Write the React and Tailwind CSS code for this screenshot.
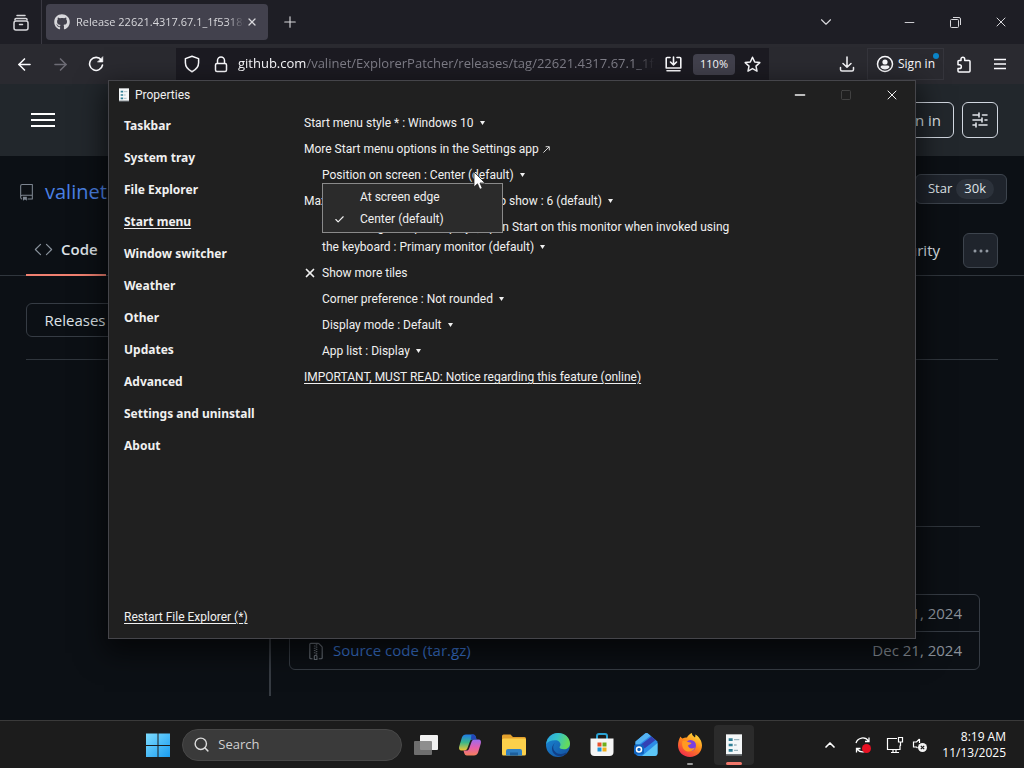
import {
  ArrowLeft,
  ArrowRight,
  Check,
  ChevronDown,
  ChevronUp,
  Minus,
  Plus,
  Search,
  Square,
  X,
} from 'lucide-react'
import { GoCode, GoFileZip, GoKebabHorizontal, GoRepo } from 'react-icons/go'
import { FaGithub } from 'react-icons/fa'

const SECTIONS = [
  'Taskbar',
  'System tray',
  'File Explorer',
  'Start menu',
  'Window switcher',
  'Weather',
  'Other',
  'Updates',
  'Advanced',
  'Settings and uninstall',
  'About',
]

const POSITIONS = ['At screen edge', 'Center (default)']

const ASSETS = [
  { name: 'Source code', ext: '(zip)', date: 'Dec 21, 2024' },
  { name: 'Source code', ext: '(tar.gz)', date: 'Dec 21, 2024' },
]

const IconButton = ({ label, className = '', children }) => (
  <button aria-label={label} className={`flex items-center justify-center shrink-0 ${className}`}>
    {children}
  </button>
)

/* ---------- Browser ---------- */

const FirefoxViewIcon = () => (
  <svg width="16" height="17" viewBox="0 0 16 17" fill="none" stroke="currentColor" strokeWidth="1.5" strokeLinecap="round">
    <path d="M4 1.500h8" />
    <path d="M2 6V5.500a1 1 0 0 1 1-1h10a1 1 0 0 1 1 1V6" />
    <rect x="1" y="7" width="14" height="9" rx="2" />
    <path d="M6.500 10.500h3" />
  </svg>
)

const ReloadIcon = () => (
  <svg width="16" height="16" viewBox="0 0 16 16" fill="none" stroke="currentColor" strokeWidth="1.600" strokeLinecap="round" strokeLinejoin="round">
    <path d="M13.300 4A6.500 6.500 0 1 0 14.500 9" />
    <path d="M14.800 1v5H9.800z" fill="currentColor" strokeWidth=".6" />
  </svg>
)

const RestoreIcon = () => (
  <svg width="11" height="11" viewBox="0 0 11 11" fill="none" stroke="currentColor">
    <rect x=".5" y="2.500" width="8" height="8" rx="1" />
    <path d="M3 .5h6a1.500 1.500 0 0 1 1.500 1.500v6" />
  </svg>
)

const ShieldIcon = () => (
  <svg width="16" height="18" viewBox="0 0 16 18" fill="none" stroke="currentColor" strokeWidth="1.5" strokeLinejoin="round">
    <path d="M8 1.200 14.600 3.600v4.200c0 4-2.600 7-6.600 8.900-4-1.900-6.600-4.900-6.600-8.900V3.600z" />
  </svg>
)

const LockIcon = () => (
  <svg width="14" height="17" viewBox="0 0 14 17" fill="none" stroke="currentColor" strokeWidth="1.5">
    <rect x="1.5" y="7.5" width="11" height="8" rx="1.5" />
    <path d="M3.500 7.500V4.500a3.500 3.500 0 0 1 7 0v3" />
  </svg>
)

const InstallIcon = () => (
  <svg width="17" height="16" viewBox="0 0 17 16" fill="none" stroke="currentColor" strokeWidth="1.6" strokeLinecap="round" strokeLinejoin="round">
    <path d="M5 1.500H2.200a1 1 0 0 0-1 1V12h14.600V2.500a1 1 0 0 0-1-1H12M8.500 1v7.500M5.500 6l3 3 3-3M2 14.800h13" />
  </svg>
)

const StarIcon = () => (
  <svg width="17" height="17" viewBox="0 0 17 17" fill="none" stroke="currentColor" strokeWidth="1.5" strokeLinejoin="round">
    <path d="m8.500 1.300 2.200 4.700 5.100.6-3.800 3.500 1 5.100-4.500-2.600-4.500 2.600 1-5.100L1.200 6.600l5.100-.6z" />
  </svg>
)

const DownloadIcon = () => (
  <svg width="16" height="16" viewBox="0 0 16 16" fill="none" stroke="currentColor" strokeWidth="1.500" strokeLinecap="round" strokeLinejoin="round">
    <path d="M8 1v10M4 7.500 8 11.300l4-3.800M1.500 11.500v2a1.500 1.500 0 0 0 1.500 1.500h10a1.500 1.500 0 0 0 1.500-1.500v-2" />
  </svg>
)

const AccountIcon = () => (
  <svg width="18" height="18" viewBox="0 0 18 18" fill="none">
    <circle cx="9" cy="9" r="7.500" stroke="currentColor" strokeWidth="1.500" />
    <circle cx="9" cy="7" r="2.600" fill="currentColor" />
    <path d="M4.500 12.300c0-1.200 1-1.800 2.200-1.800h4.600c1.200 0 2.200.6 2.200 1.800-1.200 1.500-2.700 2.200-4.500 2.200s-3.300-.7-4.500-2.200z" fill="currentColor" />
  </svg>
)

const PuzzleIcon = () => (
  <svg width="16" height="17" viewBox="0 0 16 17" fill="none" stroke="currentColor" strokeWidth="1.500" strokeLinejoin="round">
    <path d="M5 4.500V3a1.800 1.800 0 0 1 3.700 0v1.500H13a1 1 0 0 1 1 1V15a1 1 0 0 1-1 1H3a1 1 0 0 1-1-1v-2.500h1.500a1.800 1.800 0 0 0 0-3.700H2V5.500a1 1 0 0 1 1-1z" />
  </svg>
)

const TabStrip = () => (
  <div className="flex items-center h-11 bg-[#1e1e25] text-[#d8d8dc]">
    <IconButton label="Firefox View" className="w-[42px] h-full border-r border-[#3a3942]">
      <FirefoxViewIcon />
    </IconButton>
    <div className="flex items-center ml-1 w-[222px] h-9 px-2 rounded bg-[#42414d]">
      <FaGithub size={16} className="shrink-0" />
      <span className="flex-1 ml-1.5 overflow-hidden whitespace-nowrap text-[11px] mask-r-from-90%">
        Release 22621.4317.67.1_1f5318c
      </span>
      <IconButton label="Close tab" className="w-4">
        <X size={12} strokeWidth={2.5} />
      </IconButton>
    </div>
    <IconButton label="New tab" className="w-11">
      <Plus size={18} strokeWidth={1.5} />
    </IconButton>
    <div className="flex items-center ml-auto">
      <IconButton label="List all tabs" className="w-10 mr-10">
        <ChevronDown size={18} strokeWidth={1.5} />
      </IconButton>
      <IconButton label="Minimize" className="w-[46px]">
        <Minus size={15} strokeWidth={1.5} />
      </IconButton>
      <IconButton label="Restore" className="w-[46px]">
        <RestoreIcon />
      </IconButton>
      <IconButton label="Close" className="w-[46px]">
        <X size={16} strokeWidth={1.5} />
      </IconButton>
    </div>
  </div>
)

const NavBar = () => (
  <div className="flex items-center h-10 bg-[#2a2a30] text-[#fbfbfe]">
    <IconButton label="Back" className="w-9 ml-1.5">
      <ArrowLeft size={19} strokeWidth={2} />
    </IconButton>
    <IconButton label="Forward" className="w-9 text-[#6d6c75]">
      <ArrowRight size={19} strokeWidth={2} />
    </IconButton>
    <IconButton label="Reload" className="w-9">
      <ReloadIcon />
    </IconButton>
    <div className="flex items-center flex-1 min-w-0 max-w-[593px] h-8 ml-[62px] pl-2 bg-[#1c1b22]">
      <ShieldIcon />
      <span className="ml-3.5"><LockIcon /></span>
      <p className="flex-1 ml-2.5 overflow-hidden whitespace-nowrap text-[13px] text-[#7f7e88] mask-r-from-95%">
        <span className="text-[#fbfbfe]">github.com</span>
        /valinet/ExplorerPatcher/releases/tag/22621.4317.67.1_1f5318c
      </p>
      <IconButton label="Install app" className="ml-2 w-5">
        <InstallIcon />
      </IconButton>
      <button className="h-[21px] px-[7px] ml-2.5 rounded-sm bg-[#42414d] text-[11px]">110%</button>
      <IconButton label="Bookmark" className="w-[34px]">
        <StarIcon />
      </IconButton>
    </div>
    <div className="flex items-center h-full ml-auto">
      <IconButton label="Downloads" className="w-10">
        <DownloadIcon />
      </IconButton>
      <button className="relative flex items-center gap-1 h-8 px-2 border border-[#35353c] text-xs whitespace-nowrap">
        <AccountIcon />
        Sign in
        <span className="absolute right-1 top-1 size-1.5 rounded-full bg-[#0a84c8]" />
      </button>
      <IconButton label="Extensions" className="w-10">
        <PuzzleIcon />
      </IconButton>
      <IconButton label="Menu" className="w-8 mr-2">
        <svg width="12" height="12" viewBox="0 0 12 12" stroke="currentColor" strokeWidth="1.300">
          <path d="M0 1.500h12M0 6h12M0 10.500h12" />
        </svg>
      </IconButton>
    </div>
  </div>
)

/* ---------- GitHub release page ---------- */

const TuneIcon = () => (
  <svg width="16" height="16" viewBox="0 0 16 16" fill="none" stroke="currentColor" strokeWidth="1.600" strokeLinecap="round">
    <path d="M1 3h6M10.500 3H15M7 1v4M1 8h9M13 8h2M10 6v4M1 13h3M7 13h8M4 11v4" />
  </svg>
)

const ReleasePage = () => (
  <div className="text-[15px] text-[#dfe3e8]">
    <header className="flex items-center h-[72px] px-[26px] bg-[#22272c]">
      <IconButton label="Open menu" className="w-[34px]">
        <svg width="24" height="16" viewBox="0 0 24 16" fill="#fff">
          <path d="M0 1h24v2H0zM0 7h24v2H0zM0 13h24v2H0z" />
        </svg>
      </IconButton>
      <button className="h-9 px-3 ml-auto rounded-md border border-[#d1d7e0]">Sign in</button>
      <IconButton label="Appearance settings" className="size-9 ml-2 rounded-md border border-[#d1d7e0]">
        <TuneIcon />
      </IconButton>
    </header>

    {/* Repo title */}
    <div className="flex items-center justify-between mt-[18px] pl-[18px] pr-[17px] h-[30px]">
      <div className="flex items-center gap-2.5 pt-1.5">
        <GoRepo size={17} className="text-[#7d8590]" />
        <a href="#valinet" className="text-xl text-[#4a80e4]">valinet</a>
      </div>
      <button className="flex items-center gap-1 h-[30px] px-3 rounded-md border border-[#3d444d] bg-[#1f242c] text-[13px]">
        Star
        <span className="px-2 rounded-full bg-[#2c323b]">30k</span>
      </button>
    </div>

    {/* Repo tabs */}
    <nav className="flex items-center h-[50px] mt-[22px] px-[26px] border-b border-[#30363d]">
      <a href="#code" className="flex items-center gap-2 h-[50px] px-2 border-b-2 border-[#f08070] font-semibold">
        <GoCode size={19} className="text-[#8b949e]" />
        Code
      </a>
      <a href="#security" className="ml-auto mr-[23px]">Security</a>
      <IconButton label="More tabs" className="size-[35px] rounded-md border border-[#3d444d] bg-[#1f242c] text-[#9198a1]">
        <GoKebabHorizontal size={18} />
      </IconButton>
    </nav>

    <div className="px-[26px]">
      <button className="h-[34px] w-[98px] mt-[27px] rounded-md border border-[#363c44]">Releases</button>
      <hr className="mt-[22px] border-[#30363d]" />
      <div className="flex">
        <div className="w-[243px] shrink-0" />
        <div className="flex-1 h-[336px] pl-[18px] pr-[18px] pt-[166px] border-l-2 border-[#363b42]">
          <hr className="border-[#30363d]" />
          <ul className="mt-[67px] rounded-md border border-[#363c44] divide-y divide-[#363c44]">
            {ASSETS.map((asset) => (
              <li key={asset.ext} className="flex items-center h-[37px] px-[17px]">
                <GoFileZip size={18} className="text-[#6b727b]" />
                <a href={`#${asset.ext}`} className="ml-2 text-[#3a74d0]">
                  <span className="font-medium">{asset.name}</span> {asset.ext}
                </a>
                <span className="ml-auto text-[#8b929b]">{asset.date}</span>
              </li>
            ))}
          </ul>
        </div>
      </div>
    </div>
  </div>
)

/* ---------- ExplorerPatcher properties window ---------- */

const SheetIcon = ({ className }) => (
  <svg viewBox="0 0 12 16" className={className}>
    <rect width="12" height="15" x="0" y="0" fill="#f4f7f8" />
    <path d="M2 3h3v2H2zM2 7h3v2H2zM2 11h3v2H2z" fill="#2f7f95" />
    <path d="M6 4h4M6 8h2M6 12h3" stroke="#9bb4bd" />
    <path d="M0 15.500h12" stroke="#6d7478" />
  </svg>
)

const Option = ({ id, label, value, className = '', children }) => (
  <div className={`relative leading-5 ${className}`}>
    <label htmlFor={id}>{label} :</label>{' '}
    <select id={id} defaultValue={value} className="appearance-none field-sizing-content leading-5">
      <option>{value}</option>
    </select>
    <svg width="5" height="4" viewBox="0 0 5 4" fill="currentColor" className="inline ml-1.5 mb-0.5">
      <path d="M0 0h5L2.500 4z" />
    </svg>
    {children}
  </div>
)

const PositionMenu = () => (
  <ul role="listbox" aria-label="Position on screen" className="absolute left-0 top-[18px] z-10 w-[181px] py-0.5 border border-[#8a8a8a] bg-[#2b2b2b]">
    {POSITIONS.map((pos) => {
      const selected = pos === 'Center (default)'
      return (
        <li key={pos} role="option" aria-selected={selected} className="flex items-center h-[22px]">
          <span className="w-[37px] pl-[11px]">
            {selected && <Check size={11} strokeWidth={2.5} />}
          </span>
          {pos}
        </li>
      )
    })}
  </ul>
)

const PropertiesWindow = () => (
  <section className="absolute left-[108px] top-20 flex flex-col w-[808px] h-[559px] border border-[#45454a] bg-[#202020] font-['Roboto','Open_Sans',sans-serif] text-xs text-[#f0f0f0] shadow-[0_10px_26px_4px_rgba(0,0,0,0.6)]">
    <div className="flex items-center h-7 pl-2.5">
      <SheetIcon className="w-2.5 h-3.5" />
      <h1 className="ml-1.5">Properties</h1>
      <div className="flex ml-auto">
        <IconButton label="Minimize" className="w-[46px]">
          <Minus size={16} strokeWidth={2} />
        </IconButton>
        <IconButton label="Maximize" className="w-[46px] text-[#4c4c4c]">
          <Square size={12} strokeWidth={1.5} />
        </IconButton>
        <IconButton label="Close" className="w-[46px]">
          <X size={16} strokeWidth={1.5} />
        </IconButton>
      </div>
    </div>

    <div className="flex flex-1 pl-[15px]">
      <nav className="flex flex-col items-start w-[180px] shrink-0 pt-px pb-[13px]">
        {SECTIONS.map((name) => (
          <a
            key={name}
            href={`#${name}`}
            className={`h-8 leading-8 font-['Noto_Sans'] font-bold ${name === 'Start menu' ? 'underline underline-offset-2' : ''}`}
          >
            {name}
          </a>
        ))}
        <button className="mt-auto underline underline-offset-2">Restart File Explorer (*)</button>
      </nav>

      <div className="flex flex-col items-start gap-1.5 flex-1 pt-1">
        <Option id="style" label="Start menu style *" value="Windows 10" />
        <a href="#settings" className="leading-5">
          More Start menu options in the Settings app
          <svg width="7" height="7" viewBox="0 0 8 8" fill="none" stroke="currentColor" className="inline ml-1">
            <path d="M.5 7.500 7 1M3 .8h4.200V5" />
          </svg>
        </a>
        <Option id="position" label="Position on screen" value="Center (default)" className="ml-[18px]">
          <PositionMenu />
        </Option>
        <Option id="frequent" label="Maximum number of frequent apps to show" value="6 (default)" />
        <Option
          id="monitor"
          label="When using multiple displays, open Start on this monitor when invoked using the keyboard"
          value="Primary monitor (default)"
          className="ml-[18px] max-w-[426px]"
        />
        <div className="relative flex items-center leading-5">
          <input id="tiles" type="checkbox" defaultChecked className="peer appearance-none w-[18px] h-3" />
          <X size={14} strokeWidth={3} className="absolute -left-px pointer-events-none" />
          <label htmlFor="tiles">Show more tiles</label>
        </div>
        <Option id="corner" label="Corner preference" value="Not rounded" className="ml-[18px]" />
        <Option id="display" label="Display mode" value="Default" className="ml-[18px]" />
        <Option id="applist" label="App list" value="Display" className="ml-[18px]" />
        <a href="#notice" className="leading-5 underline underline-offset-2">
          IMPORTANT, MUST READ: Notice regarding this feature (online)
        </a>
      </div>
    </div>
  </section>
)

const Cursor = () => (
  <svg width="13" height="20" viewBox="0 0 13 20" className="absolute left-[473px] top-[171px] z-20">
    <path d="M1 1v15l3.500-3.200 2.300 5.500 2.500-1-2.300-5.300H12z" fill="#fff" stroke="#222" strokeWidth=".8" />
  </svg>
)

/* ---------- Taskbar ---------- */

const StartLogo = () => (
  <svg width="24" height="24" viewBox="0 0 24 24">
    <defs>
      <linearGradient id="win" x1="0" y1="0" x2="1" y2="1">
        <stop offset="0" stopColor="#7ddcff" />
        <stop offset="1" stopColor="#1a9cf0" />
      </linearGradient>
    </defs>
    <path d="M0 .5h11.500V12H0zM12.500.5H24V12H12.500zM0 13h11.500v11H0zM12.500 13H24v11H12.500z" fill="url(#win)" />
  </svg>
)

const TaskViewIcon = () => (
  <svg width="26" height="24" viewBox="0 0 26 24">
    <rect x="7" y="2" width="18" height="15" rx="1" fill="#f2f2f2" />
    <rect x="1" y="8" width="18" height="14" rx="1" fill="#7c7c7c" fillOpacity=".85" />
  </svg>
)

const CopilotIcon = () => (
  <svg width="24" height="24" viewBox="0 0 24 24">
    <defs>
      <linearGradient id="cpA" x1="0" y1="0" x2="0" y2="1">
        <stop offset="0" stopColor="#1f7be8" />
        <stop offset=".5" stopColor="#3bb78a" />
        <stop offset="1" stopColor="#f3c531" />
      </linearGradient>
      <linearGradient id="cpB" x1="0" y1="0" x2="0" y2="1">
        <stop offset="0" stopColor="#9a6cf0" />
        <stop offset=".5" stopColor="#e45fae" />
        <stop offset="1" stopColor="#f6805a" />
      </linearGradient>
    </defs>
    <path d="M8 1.500h7c1.800 0 2.400 1.200 2.900 2.800l.6 2.200h-4c-1.500 0-2.200.8-2.700 2.300L9.500 15c-.5 1.600-1.300 2.500-3 2.500H3.500C1.200 17.500.6 15.500 1.200 13.500l2.700-9C4.600 2.400 6 1.500 8 1.500z" fill="url(#cpA)" />
    <path d="M16 22.500H9c-1.800 0-2.400-1.200-2.900-2.800l-.6-2.200h3c1.500 0 2.200-.8 2.700-2.300L13.500 9c.5-1.600 1.300-2.500 3-2.500h4c2.300 0 2.900 2 2.300 4l-2.700 9c-.7 2.100-2.100 3-4.100 3z" fill="url(#cpB)" />
    <path d="M15 1.500c1.800 0 2.400 1.200 2.900 2.800l.6 2.200h-4c-.8 0-1.400.3-1.800.8L13.500 1.500z" fill="#2347b8" />
  </svg>
)

const FolderIcon = () => (
  <svg width="26" height="24" viewBox="0 0 26 24">
    <path d="M1 3a1.500 1.500 0 0 1 1.500-1.500h7L12 4h11.500A1.500 1.500 0 0 1 25 5.500V9H1z" fill="#e3a02c" />
    <rect x="1" y="5.500" width="24" height="17" rx="1.500" fill="#fbd04b" />
    <path d="M5 22.500V18a2 2 0 0 1 2-2h12a2 2 0 0 1 2 2v4.500z" fill="#2f80c4" />
    <path d="M9 19.500h8v3H9z" fill="#1d5f9c" />
  </svg>
)

const EdgeIcon = () => (
  <svg width="26" height="26" viewBox="0 0 26 26">
    <defs>
      <linearGradient id="edA" x1="0" y1="0" x2="1" y2=".3">
        <stop offset="0" stopColor="#2ba4e6" />
        <stop offset=".5" stopColor="#35c1c8" />
        <stop offset="1" stopColor="#64da5c" />
      </linearGradient>
      <linearGradient id="edB" x1="0" y1="0" x2="1" y2="1">
        <stop offset="0" stopColor="#1a8ad6" />
        <stop offset="1" stopColor="#134f9f" />
      </linearGradient>
    </defs>
    <circle cx="13" cy="13" r="12" fill="url(#edB)" />
    <path d="M1.200 12C2 5.500 7 1 13 1c7 0 12 4.800 12 10.500 0 3.600-2.800 5.800-6 5.800-2.800 0-4.500-1-4.500-2 0-.7 1-1.200 1-2.800 0-2.300-2.200-4.300-5.300-4.300C6 8.200 2.500 9.500 1.200 12z" fill="url(#edA)" />
    <path d="M10.500 10.500c-2.500 2-3 5.500-1.200 8.300 2 3.200 6.700 4.300 11.200 2 .7-.4 1.200 0 .8.600C18 24.600 13 24.800 10 22.500c-4-3-4-9 .5-12z" fill="#123f86" />
  </svg>
)

const StoreIcon = () => (
  <svg width="26" height="26" viewBox="0 0 26 26">
    <path d="M8 7V4a2 2 0 0 1 2-2h6a2 2 0 0 1 2 2v3" fill="none" stroke="#2aa3d5" strokeWidth="2" />
    <path d="M1.500 6.500h23V20a4 4 0 0 1-4 4h-15a4 4 0 0 1-4-4z" fill="#f5f5f5" />
    <path d="M8.500 10.500h4v4h-4z" fill="#e8502c" />
    <path d="M13.500 10.500h4v4h-4z" fill="#6fae1c" />
    <path d="M8.500 15.500h4v4h-4z" fill="#1c94d8" />
    <path d="M13.500 15.500h4v4h-4z" fill="#f0b01c" />
  </svg>
)

const OutlookIcon = () => (
  <svg width="26" height="26" viewBox="0 0 26 26">
    <path d="M2.500 9.500 11.500 2a3 3 0 0 1 4 0l9 7.500V21a3 3 0 0 1-3 3H6a3.500 3.500 0 0 1-3.500-3z" fill="#2c8be8" />
    <path d="M2.500 9.500 11.500 2a3 3 0 0 1 4 0L17.500 3.700 6 12.500H2.500z" fill="#55b3f2" />
    <path d="M8 12.500 18.500 4.600 22.500 8 11.500 16.500z" fill="#3440b4" />
    <path d="M24.500 11v10a3 3 0 0 1-3 3H9z" fill="#5cc6f7" />
    <rect x="1" y="12.500" width="10" height="10" rx="2" fill="#0f62bd" />
    <circle cx="6" cy="17.500" r="2.500" fill="none" stroke="#fff" strokeWidth="1.500" />
  </svg>
)

const FirefoxIcon = () => (
  <svg width="26" height="26" viewBox="0 0 26 26">
    <defs>
      <linearGradient id="fx" x1=".8" y1="0" x2=".2" y2="1">
        <stop offset="0" stopColor="#ffe13c" />
        <stop offset=".45" stopColor="#ff8a1c" />
        <stop offset="1" stopColor="#f0254f" />
      </linearGradient>
    </defs>
    <path d="M3.500 4.500c.5 1 1.200 1.600 2 2C7 5.500 8.800 5.300 10 5.500c1-2 2.500-3.500 5-4.500-.5 2 1.500 3 3 4.500.5-1 .5-2 .3-3 3.500 2 6.700 6 6.700 11 0 6.500-5.200 11.500-12 11.500S1 20 1 13.500c0-3.500 1-6.500 2.500-9z" fill="url(#fx)" />
    <circle cx="13.500" cy="13.500" r="5.500" fill="#7a3fe0" />
    <path d="M5.500 9c2-.5 4-.3 5.500 1 1.500.2 2.700.5 3.500 1-.8 1.700-2.800 1.500-3.500 2.500.5 3 4 4 7 2-1.500 3.500-5.500 5-9 3.500C5.500 17.500 4.500 13 5.500 9z" fill="#ff9a22" />
  </svg>
)

const APPS = [
  { name: 'Task View', icon: TaskViewIcon },
  { name: 'Copilot', icon: CopilotIcon },
  { name: 'File Explorer', icon: FolderIcon },
  { name: 'Edge', icon: EdgeIcon },
  { name: 'Store', icon: StoreIcon },
  { name: 'Outlook', icon: OutlookIcon },
  { name: 'Firefox', icon: FirefoxIcon, running: true },
]

const SyncIcon = () => (
  <svg width="18" height="18" viewBox="0 0 18 18" fill="none" stroke="currentColor" strokeWidth="1.300">
    <path d="M2 7a7 7 0 0 1 12.500-2M15 1.500V5.500h-4M15.500 10a7 7 0 0 1-12.500 3M2.500 16.500v-4h4" />
    <circle cx="12.500" cy="12.500" r="4.500" fill="#e81123" stroke="none" />
  </svg>
)

const NetworkIcon = () => (
  <svg width="18" height="18" viewBox="0 0 18 18" fill="none" stroke="currentColor" strokeWidth="1.200">
    <path d="M11 2.500H1.500v11H14V9.500M5 16.500h8M7 13.500v3M10 13.500v3" />
    <path d="M12.500 1.500h4v4.500h-4zM14.500 6v4" />
  </svg>
)

const MutedIcon = () => (
  <svg width="16" height="16" viewBox="0 0 16 16" fill="none" stroke="currentColor" strokeWidth="1.200">
    <path d="M7.500 2v4M7.500 2 4.500 5H1.500v5h3l1 1" />
    <circle cx="10.500" cy="10.500" r="4.500" fill="#f5f5f5" stroke="none" />
    <path d="m8.800 8.800 3.400 3.400m0-3.400-3.400 3.400" stroke="#1c1c1c" />
  </svg>
)

const Taskbar = () => (
  <footer className="flex items-center justify-end h-12 mt-auto border-t border-[#3a3a3a] bg-[#1c1c1c] text-white text-xs">
    <button aria-label="Start" className="mr-3"><StartLogo /></button>
    <label className="flex items-center gap-2 w-[220px] h-8 px-2.5 rounded-full border border-[#484848] bg-[#3a3a3a]">
      <Search size={17} strokeWidth={2} className="shrink-0 text-[#dcdcdc]" />
      <input type="text" aria-label="Search" placeholder="Search" className="w-full text-[13px] placeholder:text-[#d0d0d0] outline-none" />
    </label>
    <div className="flex items-center ml-0.5">
      {APPS.map(({ name, icon: Icon, running }) => (
        <button key={name} aria-label={name} className="relative flex items-center justify-center w-11 h-10">
          <Icon />
          {running && <span className="absolute bottom-0 w-1.5 h-0.5 rounded-full bg-[#9a9a9a]" />}
        </button>
      ))}
      <button aria-label="Properties" className="relative flex items-center justify-center w-10 h-10 ml-0.5 rounded bg-[#2b2b2b]">
        <SheetIcon className="w-4 h-[22px]" />
        <span className="absolute bottom-0 w-4 h-[3px] rounded-full bg-[#f0776a]" />
      </button>
    </div>
    <div className="flex items-center ml-[68px] mr-[18px]">
      <IconButton label="Show hidden icons" className="w-4 mr-4">
        <ChevronUp size={16} strokeWidth={2.5} />
      </IconButton>
      <SyncIcon />
      <span className="ml-3.5"><NetworkIcon /></span>
      <span className="ml-2"><MutedIcon /></span>
      <p className="ml-3.5 text-right leading-4 whitespace-nowrap">
        8:19 AM
        <br />
        11/13/2025
      </p>
    </div>
  </footer>
)

const App = () => (
  <div className="relative flex flex-col min-h-screen overflow-hidden bg-[#0c1015] font-['Open_Sans','Noto_Sans',sans-serif]">
    <TabStrip />
    <NavBar />
    <ReleasePage />
    <PropertiesWindow />
    <Cursor />
    <Taskbar />
  </div>
)

export default App
